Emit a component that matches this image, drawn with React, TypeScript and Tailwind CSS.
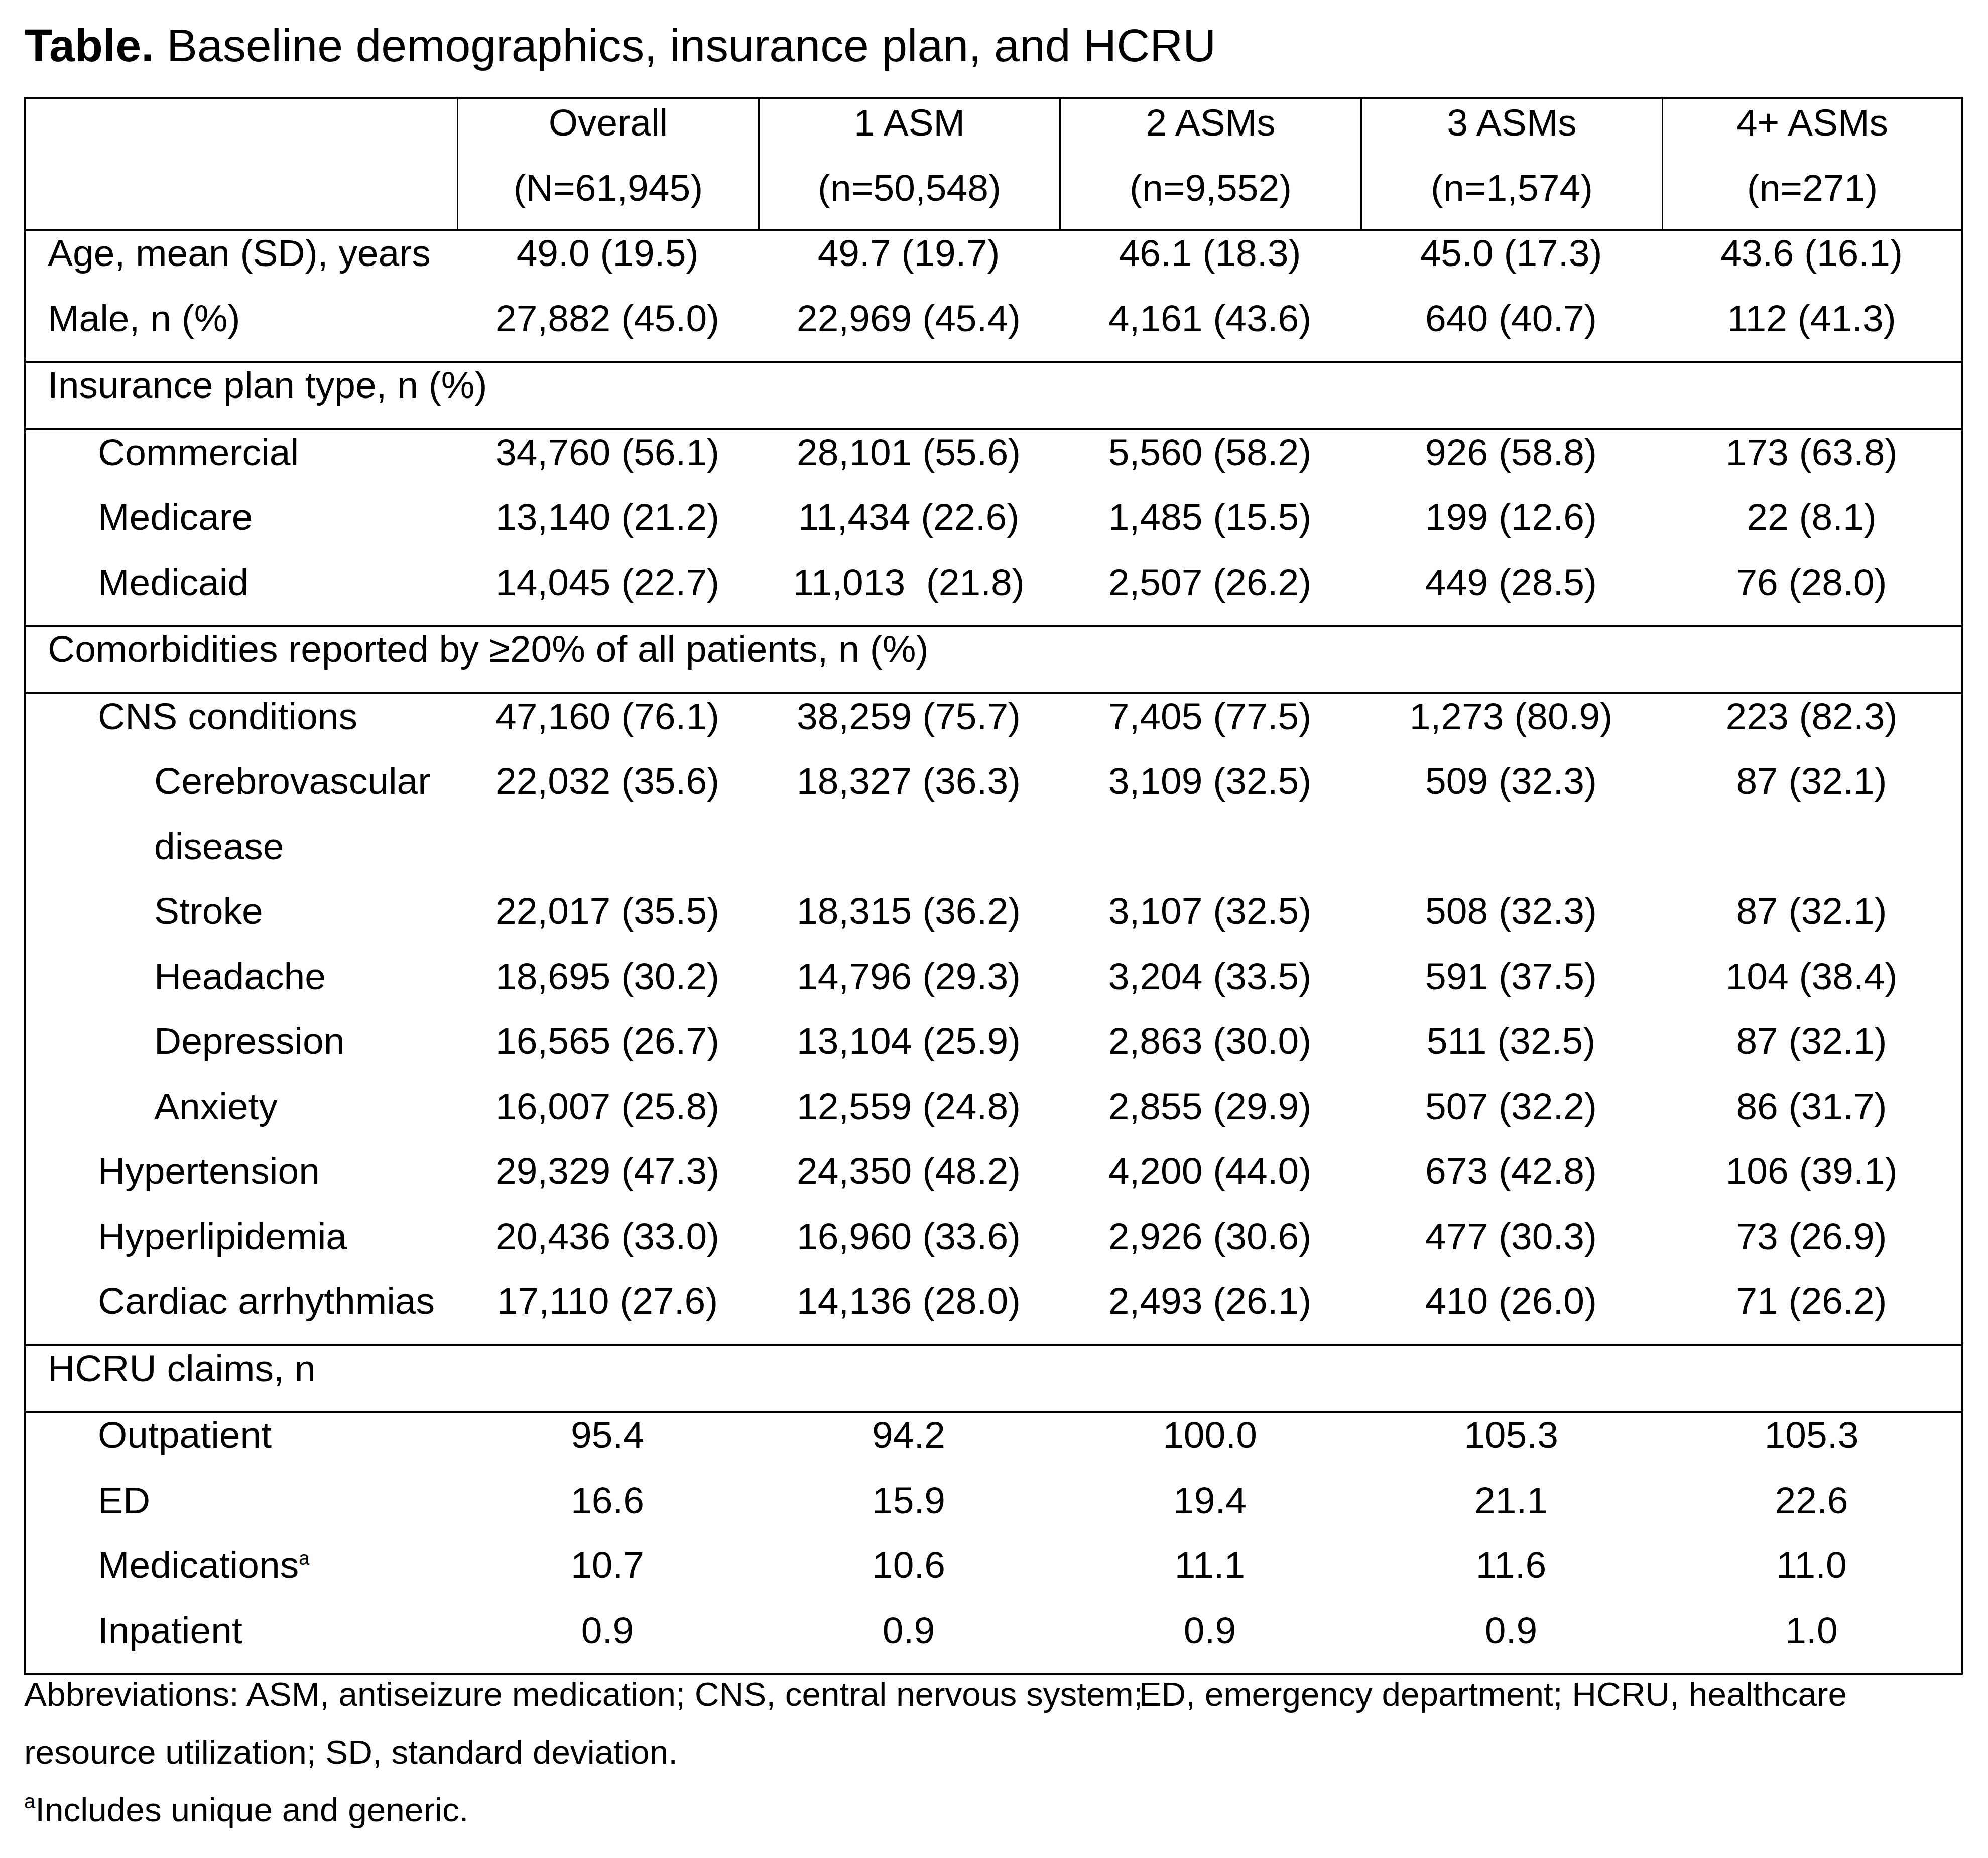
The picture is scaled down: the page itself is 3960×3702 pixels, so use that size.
import React from "react";

type Row = { label: React.ReactNode; level: 0 | 1 | 2; values: string[] };

const COLS = "grid grid-cols-[859px_600px_600px_600px_600px_1fr]";

const indent = ["pl-[44px]", "pl-[144px]", "pl-[256px]"];

const sections: { title?: string; rows: Row[] }[] = [
  {
    rows: [
      { label: "Age, mean (SD), years", level: 0, values: ["49.0 (19.5)", "49.7 (19.7)", "46.1 (18.3)", "45.0 (17.3)", "43.6 (16.1)"] },
      { label: "Male, n (%)", level: 0, values: ["27,882 (45.0)", "22,969 (45.4)", "4,161 (43.6)", "640 (40.7)", "112 (41.3)"] },
    ],
  },
  { title: "Insurance plan type, n (%)", rows: [] },
  {
    rows: [
      { label: "Commercial", level: 1, values: ["34,760 (56.1)", "28,101 (55.6)", "5,560 (58.2)", "926 (58.8)", "173 (63.8)"] },
      { label: "Medicare", level: 1, values: ["13,140 (21.2)", "11,434 (22.6)", "1,485 (15.5)", "199 (12.6)", "22 (8.1)"] },
      { label: "Medicaid", level: 1, values: ["14,045 (22.7)", "11,013\u00a0 (21.8)", "2,507 (26.2)", "449 (28.5)", "76 (28.0)"] },
    ],
  },
  { title: "Comorbidities reported by \u226520% of all patients, n (%)", rows: [] },
  {
    rows: [
      { label: "CNS conditions", level: 1, values: ["47,160 (76.1)", "38,259 (75.7)", "7,405 (77.5)", "1,273 (80.9)", "223 (82.3)"] },
      { label: "Cerebrovascular disease", level: 2, values: ["22,032 (35.6)", "18,327 (36.3)", "3,109 (32.5)", "509 (32.3)", "87 (32.1)"] },
      { label: "Stroke", level: 2, values: ["22,017 (35.5)", "18,315 (36.2)", "3,107 (32.5)", "508 (32.3)", "87 (32.1)"] },
      { label: "Headache", level: 2, values: ["18,695 (30.2)", "14,796 (29.3)", "3,204 (33.5)", "591 (37.5)", "104 (38.4)"] },
      { label: "Depression", level: 2, values: ["16,565 (26.7)", "13,104 (25.9)", "2,863 (30.0)", "511 (32.5)", "87 (32.1)"] },
      { label: "Anxiety", level: 2, values: ["16,007 (25.8)", "12,559 (24.8)", "2,855 (29.9)", "507 (32.2)", "86 (31.7)"] },
      { label: "Hypertension", level: 1, values: ["29,329 (47.3)", "24,350 (48.2)", "4,200 (44.0)", "673 (42.8)", "106 (39.1)"] },
      { label: "Hyperlipidemia", level: 1, values: ["20,436 (33.0)", "16,960 (33.6)", "2,926 (30.6)", "477 (30.3)", "73 (26.9)"] },
      { label: "Cardiac arrhythmias", level: 1, values: ["17,110 (27.6)", "14,136 (28.0)", "2,493 (26.1)", "410 (26.0)", "71 (26.2)"] },
    ],
  },
  { title: "HCRU claims, n", rows: [] },
  {
    rows: [
      { label: "Outpatient", level: 1, values: ["95.4", "94.2", "100.0", "105.3", "105.3"] },
      { label: "ED", level: 1, values: ["16.6", "15.9", "19.4", "21.1", "22.6"] },
      {
        label: (
          <>
            Medications<sup className="text-[38px] -top-[26px]">a</sup>
          </>
        ),
        level: 1,
        values: ["10.7", "10.6", "11.1", "11.6", "11.0"],
      },
      { label: "Inpatient", level: 1, values: ["0.9", "0.9", "0.9", "0.9", "1.0"] },
    ],
  },
];

const headers = [
  ["Overall", "(N=61,945)"],
  ["1 ASM", "(n=50,548)"],
  ["2 ASMs", "(n=9,552)"],
  ["3 ASMs", "(n=1,574)"],
  ["4+ ASMs", "(n=271)"],
];

export default function App() {
  return (
    <div className="w-[3960px] h-[3702px] bg-white text-black font-['Liberation_Sans',Arial,sans-serif]">
      <div className="pl-[49px] pt-[40px] text-[91.5px] leading-[100px] whitespace-nowrap">
        <span className="font-bold">Table.</span> Baseline demographics, insurance plan, and HCRU
      </div>

      <div className="ml-[48px] mt-[53px] w-[3862px] border-x-[3px] border-t-[4px] border-b-[4px] border-black text-[75px] leading-[129.5px]">
        {/* Header */}
        <div className={COLS}>
          <div className="flex flex-col">
            <div className="-mt-[17px] mb-[17px] h-[259px]" />
          </div>
          {headers.map((h, i) => (
            <div key={i} className="flex flex-col border-l-[3px] border-black text-center">
              <div className="-mt-[17px] mb-[17px]">
                <div>{h[0]}</div>
                <div>{h[1]}</div>
              </div>
            </div>
          ))}
        </div>

        {sections.map((s, si) => (
          <div key={si} className="border-t-[4px] border-black">
            <div className="-mt-[20px] mb-[20px]">
              {s.title ? (
                <div className="pl-[44px] whitespace-nowrap">{s.title}</div>
              ) : (
                s.rows.map((r, ri) => (
                  <div key={ri} className={COLS}>
                    <div className={`${indent[r.level]} pr-[4px]`}>{r.label}</div>
                    {r.values.map((v, vi) => (
                      <div key={vi} className="text-center whitespace-pre">
                        {v}
                      </div>
                    ))}
                  </div>
                ))
              )}
            </div>
          </div>
        ))}
      </div>

      <div className="-mt-[19px] pl-[48px] text-[67.5px] leading-[115px] whitespace-nowrap">
        <div>
          Abbreviations: ASM, antiseizure medication; CNS, central nervous system
          <span className="-mr-[8px]">;</span>ED, emergency department; HCRU, healthcare
        </div>
        <div>resource utilization; SD, standard deviation.</div>
        <div>
          <sup className="text-[40px] -top-[26px]">a</sup>Includes unique and generic.
        </div>
      </div>
    </div>
  );
}
